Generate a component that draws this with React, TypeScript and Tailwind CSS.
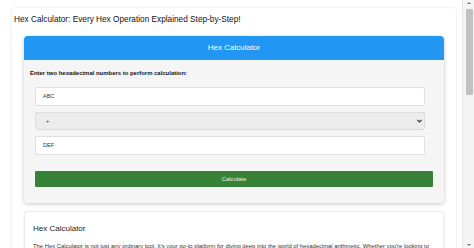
import React from "react";

const font = { fontFamily: '"Liberation Sans", Arial, sans-serif' };

function Chevron() {
  return (
    <svg width="5" height="4" viewBox="0 0 10 8" className="text-[#333]">
      <path d="M1 2l4 4 4-4" fill="none" stroke="currentColor" strokeWidth="2.2" />
    </svg>
  );
}

export default function App() {
  return (
    <div className="flex w-[474px] h-[248px] overflow-hidden bg-white text-[#222]" style={font}>
      <div className="flex-1 pt-[8px] pl-[12px]">
        <div className="w-[444px] bg-white rounded-[3px] shadow-[0_0_3px_rgba(0,0,0,0.12)] px-[12px] pt-[6px] pb-4">
          <h1 className="text-[8.25px] leading-[12px] font-normal -ml-[10px] text-[#111]">
            Hex Calculator: Every Hex Operation Explained Step-by-Step!
          </h1>

          {/* calculator card */}
          <div className="mt-[10px] rounded-[4px] bg-[#f5f5f5] shadow-[0_1px_4px_rgba(0,0,0,0.22)]">
            <div className="h-[24px] flex items-center justify-center bg-[#2196f3] text-white text-[8px] rounded-t-[4px]">
              Hex Calculator
            </div>
            <div className="px-[6px] pt-[10px] pb-[16px]">
              <p className="text-[5.95px] leading-[7px] font-bold text-[#111]">
                Enter two hexadecimal numbers to perform calculation:
              </p>
              <div className="ml-[5px] mt-[10px] flex flex-col gap-[6px]">
                <div className="w-[390px] h-[19px] flex items-center bg-white border border-[#e0e0e0] rounded-[2px] pl-[7px] text-[5.5px] text-[#333]">
                  ABC
                </div>
                <div className="w-[390px] h-[18px] flex items-center justify-between bg-[#ececec] border border-[#dcdcdc] rounded-[2px] pl-[10px] pr-[2px] text-[5.5px] text-[#333]">
                  <span>+</span>
                  <Chevron />
                </div>
                <div className="w-[390px] h-[19px] flex items-center bg-white border border-[#e0e0e0] rounded-[2px] pl-[7px] text-[5.5px] text-[#333]">
                  DEF
                </div>
                <button className="mt-[10px] w-[398px] h-[16px] flex items-center justify-center bg-[#388238] text-[#e8f2e8] text-[5.9px] rounded-[1px]">
                  Calculate
                </button>
              </div>
            </div>
          </div>

          {/* description card */}
          <div className="mt-[8px] bg-white rounded-[4px] border border-[#ececec] shadow-[0_1px_3px_rgba(0,0,0,0.1)] px-[8px] pt-[12px] pb-4">
            <h2 className="text-[8px] leading-[10px] font-normal text-[#222]">Hex Calculator</h2>
            <p className="mt-[8px] text-[5.85px] leading-[8px] text-[#333] whitespace-nowrap">
              The Hex Calculator is not just any ordinary tool. It's your go-to platform for diving deep into the world of hexadecimal arithmetic. Whether you're looking to
            </p>
          </div>
        </div>
      </div>

      {/* scrollbar */}
      <div className="w-[12px] h-full bg-[#f4f4f4] border-l border-[#e6e6e6] flex flex-col items-center">
        <div className="mt-[2px] w-0 h-0 border-l-[2px] border-r-[2px] border-b-[2px] border-l-transparent border-r-transparent border-b-[#777]" />
        <div className="mt-[5px] w-[7px] h-[86px] bg-[#c1c1c1] rounded-[1px] ml-[2px]" />
        <div className="flex-1" />
        <div className="mb-[2px] w-0 h-0 border-l-[2px] border-r-[2px] border-t-[2px] border-l-transparent border-r-transparent border-t-[#777]" />
      </div>
    </div>
  );
}
